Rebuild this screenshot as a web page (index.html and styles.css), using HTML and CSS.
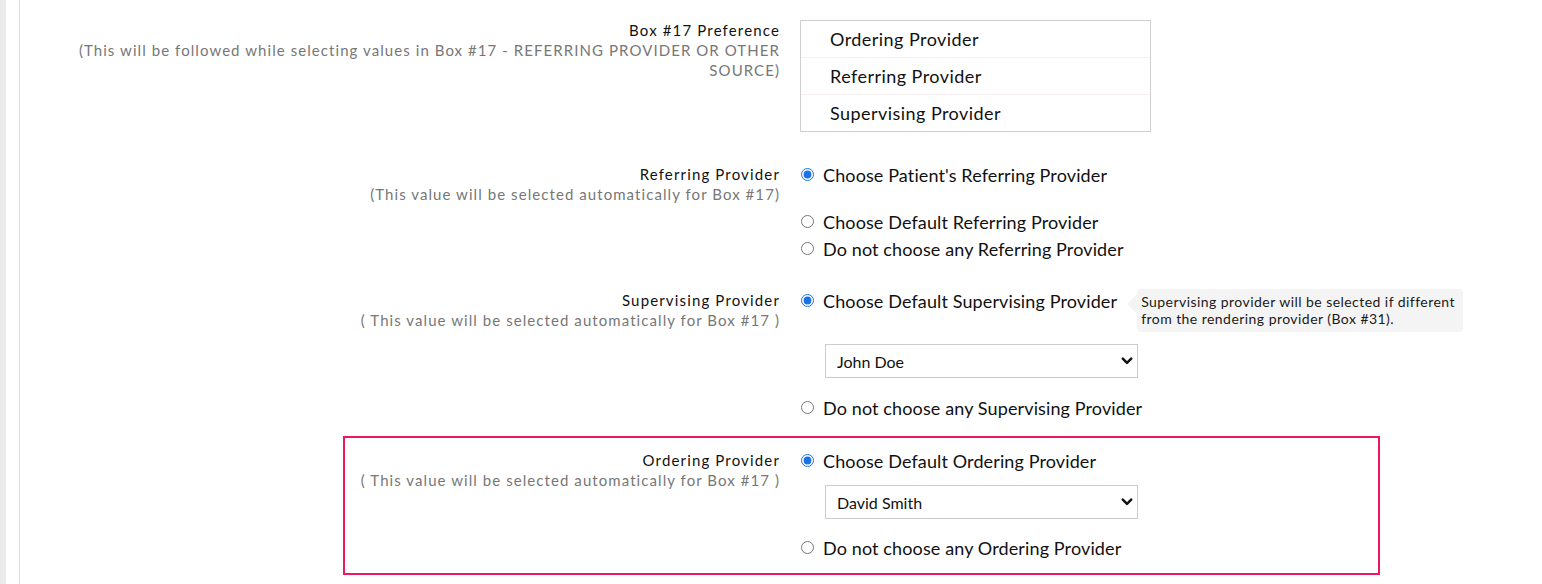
FILE: index.html
```html
<!DOCTYPE html>
<html lang="en">
<head>
<meta charset="utf-8">
<title>Box #17 Settings</title>
<link rel="stylesheet" href="styles.css">
</head>
<body>
<div class="page">
  <div class="rail"></div>
  <div class="main">
    <div class="row row-pref">
      <div class="label">
        <div class="title">Box #17 Preference</div>
        <div class="sub">(This will be followed while selecting values in Box #17 - REFERRING PROVIDER OR OTHER<br>SOURCE)</div>
      </div>
      <div class="control">
        <ul class="listbox">
          <li>Ordering Provider</li>
          <li>Referring Provider</li>
          <li>Supervising Provider</li>
        </ul>
      </div>
    </div>

    <div class="row row-ref">
      <div class="label padded">
        <div class="title">Referring Provider</div>
        <div class="sub">(This value will be selected automatically for Box #17)</div>
      </div>
      <div class="control">
        <label class="opt first"><input type="radio" name="ref" checked><span>Choose Patient's Referring Provider</span></label>
        <label class="opt"><input type="radio" name="ref"><span>Choose Default Referring Provider</span></label>
        <label class="opt"><input type="radio" name="ref"><span>Do not choose any Referring Provider</span></label>
      </div>
    </div>

    <div class="row row-sup">
      <div class="label padded">
        <div class="title">Supervising Provider</div>
        <div class="sub">( This value will be selected automatically for Box #17 )</div>
      </div>
      <div class="control">
        <label class="opt"><input type="radio" name="sup" checked><span class="has-tip">Choose Default Supervising Provider<span class="tip">Supervising provider will be selected if different<br>from the rendering provider (Box #31).</span></span></label>
        <div class="select-wrap sup-select">
          <select class="select"><option>John Doe</option></select>
          <svg class="chev" width="12" height="8" viewBox="0 0 12 8"><path d="M1.8 1.6 L6 5.8 L10.2 1.6" fill="none" stroke="#111" stroke-width="2.5" stroke-linecap="round" stroke-linejoin="round"/></svg>
        </div>
        <label class="opt sup-last"><input type="radio" name="sup"><span>Do not choose any Supervising Provider</span></label>
      </div>
    </div>

    <div class="row row-ord">
      <div class="label padded">
        <div class="title">Ordering Provider</div>
        <div class="sub">( This value will be selected automatically for Box #17 )</div>
      </div>
      <div class="control">
        <label class="opt"><input type="radio" name="ord" checked><span>Choose Default Ordering Provider</span></label>
        <div class="select-wrap ord-select">
          <select class="select"><option>David Smith</option></select>
          <svg class="chev" width="12" height="8" viewBox="0 0 12 8"><path d="M1.8 1.6 L6 5.8 L10.2 1.6" fill="none" stroke="#111" stroke-width="2.5" stroke-linecap="round" stroke-linejoin="round"/></svg>
        </div>
        <label class="opt ord-last"><input type="radio" name="ord"><span>Do not choose any Ordering Provider</span></label>
      </div>
    </div>
  </div>
</div>
</body>
</html>
```
FILE: styles.css
```css
* { box-sizing: border-box; }
html, body { margin: 0; padding: 0; background: #fff; }
body {
  font-family: Lato, "Open Sans", Arial, sans-serif;
  color: #111;
  width: 1542px;
  height: 584px;
  overflow: hidden;
}
.page {
  display: flex;
  height: 584px;
}
.rail {
  width: 6px;
  background: #ebebeb;
  flex: none;
}
.main {
  margin-left: 13px;
  border-left: 1px solid #dedede;
  flex: 1;
  padding-top: 20px;
}
.row {
  display: grid;
  grid-template-columns: 760px 1fr;
  column-gap: 20px;
  align-items: start;
}
.label {
  text-align: right;
  white-space: nowrap;
}
.label.padded { padding-top: 3px; }
.title {
  font-size: 15px;
  line-height: 20px;
  letter-spacing: 1.15px;
  color: #111;
}
.sub {
  font-size: 15px;
  line-height: 20px;
  letter-spacing: 1.07px;
  color: #777;
}
.row-ref .sub, .row-sup .sub, .row-ord .sub { line-height: 21px; }
.listbox {
  list-style: none;
  margin: 0;
  padding: 0;
  width: 351px;
  border: 1px solid #cfcfcf;
}
.listbox li {
  height: 37px;
  line-height: 37px;
  padding-left: 29px;
  font-size: 18px;
  letter-spacing: 0.45px;
  color: #111;
  border-bottom: 1px solid #f6eeee;
}
.listbox li:last-child { border-bottom: none; height: 36px; }

.row-ref { margin-top: 29px; }
.row-sup { margin-top: 25px; }

.opt {
  display: flex;
  align-items: center;
  height: 27px;
  font-size: 18px;
  letter-spacing: 0.12px;
  color: #111;
  white-space: nowrap;
}
.opt input {
  margin: 0 9px 0 1px;
  width: 13px;
  height: 13px;
  accent-color: #1a73e8;
}
.opt.first { margin-bottom: 20px; }

.has-tip { position: relative; }
.tip {
  position: absolute;
  left: calc(100% + 20px);
  top: -1px;
  width: 326px;
  padding: 4px 6px 5px 4px;
  background: #f4f4f4;
  border-radius: 4px;
  font-size: 14px;
  letter-spacing: 0.45px;
  line-height: 17px;
  color: #1a1a1a;
  white-space: nowrap;
}
.tip::before {
  content: "";
  position: absolute;
  left: -10px;
  top: 5px;
  border-top: 10px solid transparent;
  border-bottom: 10px solid transparent;
  border-right: 10px solid #f4f4f4;
}

.select-wrap {
  position: relative;
  width: 313px;
  margin-left: 25px;
}
.select {
  appearance: none;
  -webkit-appearance: none;
  display: block;
  width: 313px;
  height: 34px;
  border: 1px solid #cccccc;
  border-radius: 0;
  background: #fff;
  font-family: Lato, "Open Sans", Arial, sans-serif;
  font-size: 16px;
  color: #111;
  padding: 0 0 0 11px;
  margin: 0;
}
.chev {
  position: absolute;
  right: 5px;
  top: 13px;
  pointer-events: none;
}
.sup-select { margin-top: 30px; }
.sup-last { margin-top: 16px; }

.row-ord {
  margin-top: 15px;
  margin-left: 323px;
  width: 1037px;
  border: 2px solid #f0185c;
  grid-template-columns: 435px 1fr;
  padding: 9px 0 12px 0;
}
.ord-select { margin-top: 11px; }
.ord-last { margin-top: 15px; }
```
